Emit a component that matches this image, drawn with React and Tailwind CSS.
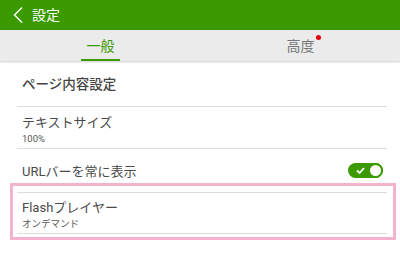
import React from "react";

const font = { fontFamily: 'Roboto, "Noto Sans CJK JP", sans-serif' };

function Toggle() {
  return (
    <div className="relative w-[35px] h-[15px] rounded-full bg-[#3a9a00]">
      <svg className="absolute left-[8px] top-[4px]" width="9" height="7" viewBox="0 0 9 7">
        <path d="M1 3.5 L3.5 6 L8 1" stroke="white" strokeWidth="1.8" fill="none" />
      </svg>
      <div className="absolute right-0 top-0 w-[15px] h-[15px] rounded-full bg-white border-[2px] border-[#3a9a00]" />
    </div>
  );
}

export default function App() {
  return (
    <div className="w-[400px] h-[260px] bg-white overflow-hidden" style={font}>
      <div className="h-[30px] bg-[#3a9a00] flex items-center pl-[13px] gap-[9px]">
        <svg width="10" height="16" viewBox="0 0 10 16">
          <path d="M9 0.5 L1.5 8 L9 15.5" stroke="white" strokeWidth="1.4" fill="none" />
        </svg>
        <span className="text-white text-[14px] leading-none">設定</span>
      </div>
      <div className="h-[31px] bg-[#ebebeb] flex shadow-[0_1px_2px_rgba(0,0,0,0.2)] relative">
        <div className="w-[201px] flex flex-col items-center justify-center relative">
          <span className="text-[#3a9a00] text-[14px] leading-none pt-[1px]">一般</span>
          <div className="absolute bottom-0 left-[81px] w-[39px] h-[2px] bg-[#3a9a00]" />
        </div>
        <div className="flex-1 flex items-center justify-center">
          <span className="relative text-[#777] text-[14px] leading-none pt-[1px]">
            高度
            <span className="absolute -right-[6px] -top-[3px] w-[5px] h-[5px] rounded-full bg-[#e8000b]" />
          </span>
        </div>
      </div>
      <div className="pl-[17px] pr-[13px]">
        <div className="h-[46px] flex items-center pl-[5px] border-b border-[#dcdcdc]">
          <span className="text-[13.5px] font-medium text-[#444] pt-[2px]">ページ内容設定</span>
        </div>
        <div className="h-[42px] flex flex-col pt-[7px] pl-[5px] border-b border-[#dcdcdc]">
          <span className="text-[13px] leading-[17px] text-[#4a4a4a]">テキストサイズ</span>
          <span className="text-[9.5px] leading-[12px] text-[#555] mt-[2px]">100%</span>
        </div>
        <div className="h-[43px] flex items-center justify-between pl-[5px] pr-[4px]">
          <span className="text-[13px] text-[#4a4a4a] pt-[3px]">URLバーを常に表示</span>
          <Toggle />
        </div>
        <div className="relative">
          <div className="h-[42px] flex flex-col pt-[6px] pl-[5px] border-y border-[#dcdcdc]">
            <span className="text-[13px] leading-[17px] text-[#4a4a4a]">Flashプレイヤー</span>
            <span className="text-[9.5px] leading-[12px] text-[#555] mt-[2px]">オンデマンド</span>
          </div>
          <div className="absolute -left-[7px] -right-[9px] -top-[9px] -bottom-[6px] border-[3px] border-[#f4b3cd]" />
        </div>
      </div>
    </div>
  );
}
